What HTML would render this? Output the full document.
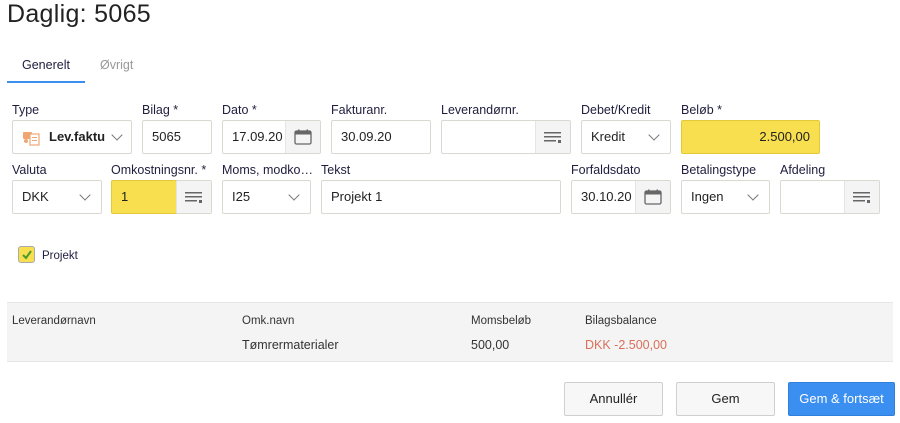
<!DOCTYPE html>
<html><head><meta charset="utf-8"><style>
*{box-sizing:border-box;margin:0;padding:0}
body{width:900px;height:423px;background:#fff;font-family:"Liberation Sans",sans-serif;color:#222;position:relative;overflow:hidden}
.a{position:absolute}
.lbl{position:absolute;font-size:12.5px;color:#1f1d3d}
.box{position:absolute;height:34px;border:1px solid #d9d9d2;border-radius:2px;background:#fff;font-size:13px;line-height:32px;padding-left:9px;color:#222}
.btn{position:absolute;top:0;right:0;width:35px;height:32px;background:#f4f4f4;border-left:1px solid #e5e5e5}
.chev{position:absolute;top:10px;width:8px;height:8px;border-right:1.3px solid #777;border-bottom:1.3px solid #777;transform:rotate(45deg)}
.yel{background:#f7df4f;border-color:#e2c93a}
.tx{position:absolute;font-size:12.5px;color:#333}
.b{position:absolute;top:382px;height:34px;border:1px solid #cfcfcf;border-radius:2px;background:#f7f7f7;font-size:13px;text-align:center;line-height:32px;color:#222}
</style></head><body>
<div class="a" style="left:7px;top:0;font-size:25px;font-weight:300;color:#222;letter-spacing:.3px">Daglig: 5065</div>
<div class="a" style="left:22px;top:58px;font-size:12.5px;color:#1f1d3d">Generelt</div>
<div class="a" style="left:100px;top:58px;font-size:12.5px;color:#999">Øvrigt</div>
<div class="a" style="left:7px;top:81px;width:78px;height:2px;background:#3a8ff0"></div>

<svg width="0" height="0" style="position:absolute"><defs>
<symbol id="cal" viewBox="0 0 18 16"><rect x="1" y="2" width="16" height="13" rx="1.5" fill="none" stroke="#666" stroke-width="1.3"/><rect x="1" y="2" width="16" height="3.5" fill="#666"/><rect x="4" y="0.5" width="1.5" height="3" fill="#666"/><rect x="12.5" y="0.5" width="1.5" height="3" fill="#666"/></symbol>
<symbol id="lst" viewBox="0 0 18 12"><rect x="0" y="0" width="17" height="1.5" fill="#666"/><rect x="0" y="4" width="17" height="1.5" fill="#666"/><rect x="0" y="8" width="12" height="1.5" fill="#666"/><rect x="14" y="8" width="3" height="3" fill="#666"/></symbol>
</defs></svg>

<div class="lbl" style="left:12px;top:103px">Type</div>
<div class="lbl" style="left:142px;top:103px">Bilag *</div>
<div class="lbl" style="left:222px;top:103px">Dato *</div>
<div class="lbl" style="left:331px;top:103px">Fakturanr.</div>
<div class="lbl" style="left:441px;top:103px">Leverandørnr.</div>
<div class="lbl" style="left:581px;top:103px">Debet/Kredit</div>
<div class="lbl" style="left:681px;top:103px">Beløb *</div>

<div class="box" style="left:12px;top:120px;width:120px;font-weight:bold;padding-left:36px">Lev.faktu
<svg class="a" style="left:10px;top:9px" width="18" height="16" viewBox="0 0 18 16"><rect x="0" y="2" width="9" height="7" rx="1" fill="#f0a672"/><circle cx="3" cy="11" r="2" fill="#f0a672"/><rect x="7" y="4" width="9" height="11" fill="#fff" stroke="#f0a672" stroke-width="1.2"/><rect x="9" y="7" width="5" height="1" fill="#f0a672"/><rect x="9" y="10" width="5" height="1" fill="#f0a672"/></svg>
<div class="chev" style="left:100px"></div></div>
<div class="box" style="left:142px;top:120px;width:70px">5065</div>
<div class="box" style="left:222px;top:120px;width:99px">17.09.20<div class="btn"><svg class="a" style="left:8px;top:8px" width="18" height="16"><use href="#cal"/></svg></div></div>
<div class="box" style="left:331px;top:120px;width:100px">30.09.20</div>
<div class="box" style="left:441px;top:120px;width:130px"><div class="btn"><svg class="a" style="left:8px;top:11px" width="18" height="12"><use href="#lst"/></svg></div></div>
<div class="box" style="left:581px;top:120px;width:90px">Kredit<div class="chev" style="left:68px"></div></div>
<div class="box yel" style="left:681px;top:120px;width:139px;text-align:right;padding-right:9px">2.500,00</div>

<div class="lbl" style="left:12px;top:163px">Valuta</div>
<div class="lbl" style="left:111px;top:163px">Omkostningsnr. *</div>
<div class="lbl" style="left:222px;top:163px">Moms, modko…</div>
<div class="lbl" style="left:321px;top:163px">Tekst</div>
<div class="lbl" style="left:571px;top:163px">Forfaldsdato</div>
<div class="lbl" style="left:681px;top:163px">Betalingstype</div>
<div class="lbl" style="left:780px;top:163px">Afdeling</div>

<div class="box" style="left:12px;top:180px;width:90px">DKK<div class="chev" style="left:68px"></div></div>
<div class="box" style="left:111px;top:180px;width:101px">
<div class="a yel" style="left:-1px;top:-1px;width:66px;height:34px;border:1px solid #e2c93a;border-radius:2px;padding-left:9px">1</div>
<div class="btn"><svg class="a" style="left:8px;top:11px" width="18" height="12"><use href="#lst"/></svg></div></div>
<div class="box" style="left:222px;top:180px;width:89px">I25<div class="chev" style="left:67px"></div></div>
<div class="box" style="left:321px;top:180px;width:240px">Projekt 1</div>
<div class="box" style="left:571px;top:180px;width:100px">30.10.20<div class="btn"><svg class="a" style="left:8px;top:8px" width="18" height="16"><use href="#cal"/></svg></div></div>
<div class="box" style="left:681px;top:180px;width:89px">Ingen<div class="chev" style="left:67px"></div></div>
<div class="box" style="left:780px;top:180px;width:100px"><div class="btn"><svg class="a" style="left:8px;top:11px" width="18" height="12"><use href="#lst"/></svg></div></div>

<div class="a" style="left:18px;top:246px;width:17px;height:17px;background:#f7df4f;border:1px solid #aaa;border-radius:3px">
<svg class="a" style="left:2px;top:2px" width="12" height="11"><path d="M2 6 L5 9 L10 2" stroke="#4a9a2e" stroke-width="2" fill="none"/></svg></div>
<div class="a" style="left:42px;top:250px;font-size:11.5px;color:#1f1d3d">Projekt</div>

<div class="a" style="left:7px;top:302px;width:886px;height:60px;background:#f4f4f4;border-top:1px solid #e6e6e6;border-bottom:1px solid #e6e6e6"></div>
<div class="tx" style="left:12px;top:315px;font-size:11.5px">Leverandørnavn</div>
<div class="tx" style="left:242px;top:315px;font-size:11.5px">Omk.navn</div>
<div class="tx" style="left:471px;top:315px;font-size:11.5px">Momsbeløb</div>
<div class="tx" style="left:585px;top:315px;font-size:11.5px">Bilagsbalance</div>
<div class="tx" style="left:242px;top:338px">Tømrermaterialer</div>
<div class="tx" style="left:471px;top:338px">500,00</div>
<div class="tx" style="left:585px;top:338px;color:#d9705a">DKK -2.500,00</div>

<div class="b" style="left:564px;width:99px">Annullér</div>
<div class="b" style="left:676px;width:99px">Gem</div>
<div class="b" style="left:788px;width:107px;background:#3b8ff0;border-color:#2f7fdc;color:#fff">Gem &amp; fortsæt</div>
</body></html>
